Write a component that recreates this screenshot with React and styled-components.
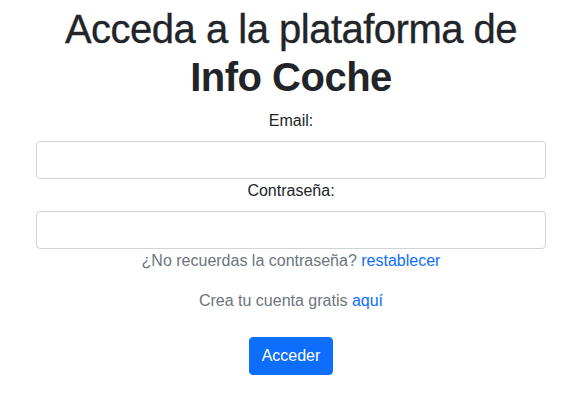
import React, { useState } from "react";
import styled, { createGlobalStyle } from "styled-components";

const GlobalStyle = createGlobalStyle`
  * {
    box-sizing: border-box;
  }
  body {
    margin: 0;
    background: #fff;
    color: #212529;
    font-family: "Liberation Sans", Arial, sans-serif;
    font-size: 16px;
    line-height: 1.5;
  }
`;

const Shell = styled.div`
  width: 582px;
`;

const Page = styled.div`
  width: 510px;
  margin: 0 auto;
  padding-top: 5px;
  text-align: center;
`;

const Title = styled.h1`
  margin: 0 0 8px;
  font-size: 40px;
  font-weight: 500;
  line-height: 1.2;
  letter-spacing: -0.5px;
  color: #212529;
  -webkit-text-stroke: 0.35px #212529;

  strong {
    font-weight: 700;
    -webkit-text-stroke: 0;
  }
`;

const Form = styled.form`
  display: flex;
  flex-direction: column;
`;

const Label = styled.label`
  display: block;
  margin-bottom: 8px;
  color: #212529;
`;

const Input = styled.input`
  display: block;
  width: 100%;
  height: 38px;
  padding: 6px 12px;
  font-family: inherit;
  font-size: 16px;
  color: #212529;
  background: #fff;
  border: 1px solid #ced4da;
  border-radius: 4px;
  outline: none;
`;

const Note = styled.p`
  margin: 0 0 16px;
  color: #6c757d;
`;

const Link = styled.a`
  color: #0d6efd;
  text-decoration: none;
`;

const Actions = styled.div`
  padding-top: 8px;
`;

const Button = styled.button`
  height: 38px;
  padding: 6px 12px;
  font-family: inherit;
  font-size: 16px;
  color: #fff;
  background: #0d6efd;
  border: 1px solid #0d6efd;
  border-radius: 4px;
  cursor: pointer;
`;

function App() {
  const [email, setEmail] = useState("");
  const [password, setPassword] = useState("");

  const handleSubmit = (evt) => {
    evt.preventDefault();
  };

  return (
    <Shell>
      <GlobalStyle />
      <Page>
        <Title>
          Acceda a la plataforma de <strong>Info Coche</strong>
        </Title>
        <Form onSubmit={handleSubmit}>
          <Label htmlFor="email">Email:</Label>
          <Input
            id="email"
            type="email"
            value={email}
            onChange={(e) => setEmail(e.target.value)}
          />
          <Label htmlFor="password">Contraseña:</Label>
          <Input
            id="password"
            type="password"
            value={password}
            onChange={(e) => setPassword(e.target.value)}
          />
          <Note>
            ¿No recuerdas la contraseña? <Link href="#">restablecer</Link>
          </Note>
          <Note>
            Crea tu cuenta gratis <Link href="#">aquí</Link>
          </Note>
          <Actions>
            <Button type="submit">Acceder</Button>
          </Actions>
        </Form>
      </Page>
    </Shell>
  );
}

export default App;
